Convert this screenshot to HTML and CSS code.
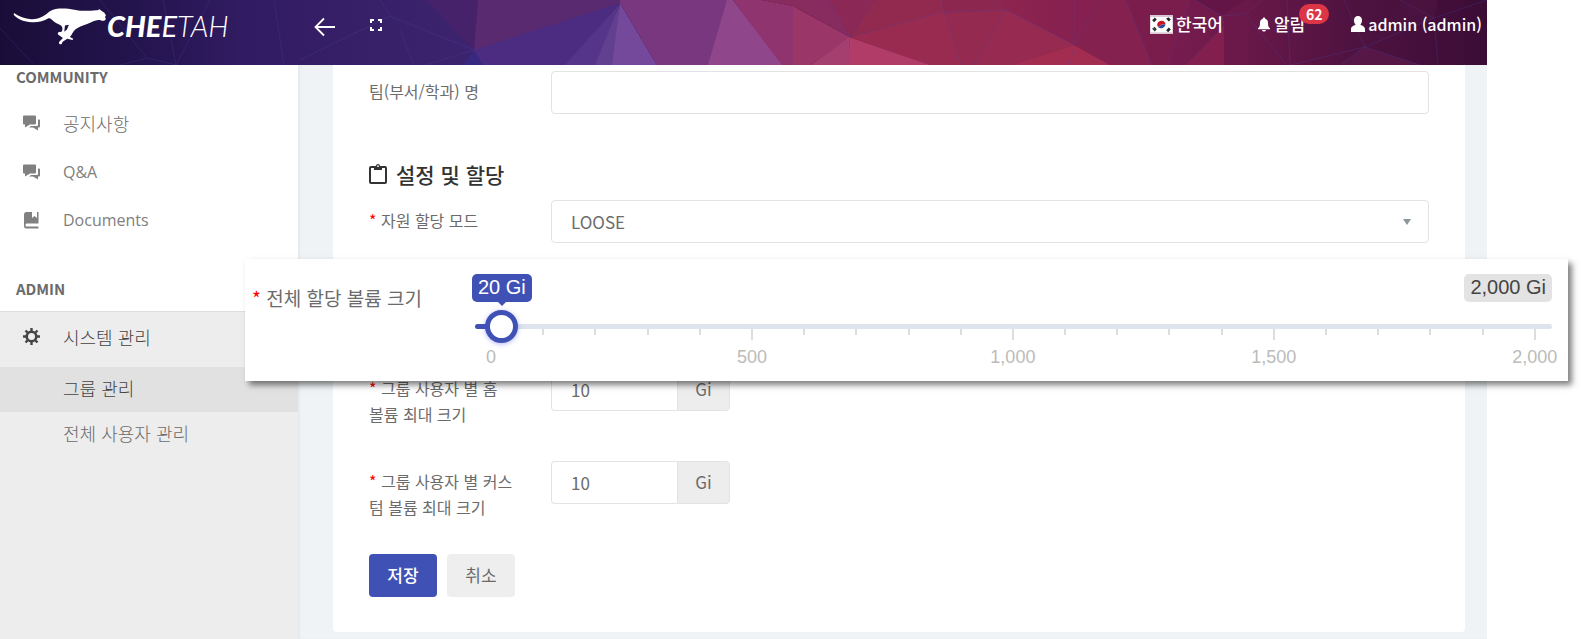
FILE: index.html
```html
<!DOCTYPE html>
<html lang="ko">
<head>
  <meta charset="UTF-8">
  <meta name="viewport" content="width=device-width, initial-scale=1.0">
  <title>CHEETAH - 그룹 관리</title>
  <link rel="stylesheet" href="styles.css">
</head>
<body>
  <div class="page">
    <header class="topbar">
      <!-- Polygon background -->
      <svg class="topbar-bg" viewBox="0 0 1487 65" preserveAspectRatio="none" aria-hidden="true">
        <defs>
          <linearGradient id="night" x1="0" x2="1" y1="0" y2="0">
            <stop offset="0" stop-color="#190d38"/>
            <stop offset="0.36" stop-color="#271654"/>
            <stop offset="0.5" stop-color="#311b61"/>
            <stop offset="1" stop-color="#3e2470"/>
          </linearGradient>
          <linearGradient id="wine" x1="0" x2="1" y1="0" y2="0">
            <stop offset="0" stop-color="#95284f"/>
            <stop offset="0.3" stop-color="#841f50"/>
            <stop offset="0.5" stop-color="#711a4c"/>
            <stop offset="0.75" stop-color="#501341"/>
            <stop offset="1" stop-color="#3a0c36"/>
          </linearGradient>
        </defs>
        <rect width="480" height="65" fill="url(#night)"/>
        <rect x="930" width="557" height="65" fill="url(#wine)"/>
        <path d="M426 0H479L474 50Z" fill="#46226b"/>
        <path d="M478 0H622V3L474 51Z" fill="#592a70"/>
        <path d="M474 50L620 3L566 65H482Z" fill="#4b2c80"/>
        <path d="M474 50L483 65H463Z" fill="#36297f"/>
        <path d="M620 3L596 65H565Z" fill="#55358a"/>
        <path d="M620 3L613 65H595Z" fill="#61408f"/>
        <path d="M620 3L657 65H612Z" fill="#74499b"/>
        <path d="M620 0H728L709 65H657L620 3Z" fill="#78377f"/>
        <path d="M727 0H733L783 65H708Z" fill="#8f468a"/>
        <path d="M733 0H762L794 6V65H782Z" fill="#8f346e"/>
        <path d="M793 6L850 37L811 65H793Z" fill="#9b3668"/>
        <path d="M760 0H830L850 37L793 6Z" fill="#882b5f"/>
        <path d="M829 0H876L849 37Z" fill="#8c2855"/>
        <path d="M875 0H942L944 13L849 37Z" fill="#92294f"/>
        <path d="M849 37L944 12L962 65H929Z" fill="#9a2b50"/>
        <path d="M849 37L811 65H851Z" fill="#a43f70"/>
        <path d="M849 37L850 65H930Z" fill="#b03c67"/>
        <path d="M944 12L1007 10L974 65H961Z" fill="#942a50"/>
        <path d="M1007 10L1074 45L1012 65H973Z" fill="#972a50"/>
        <path d="M1074 45L1012 65H1110Z" fill="#a32c51"/>
        <path d="M942 0H1003L1007 10L944 13Z" fill="#8c2750"/>
        <path d="M1126 0L1152 65H1110L1074 45L1100 0Z" fill="#84214f"/>
        <path d="M1126 0H1190L1168 65H1152Z" fill="#7a1c4c"/>
        <path d="M1224 26L1186 65H1224Z" fill="#821f4f"/>
        <path d="M1195 0H1245L1222 16Z" fill="#641548"/>
        <path d="M1365 47L1340 65H1420Z" fill="#561747"/>
        <path d="M1365 47L1402 0H1438L1434 18Z" fill="#49123f"/>
        <g class="topbar-lines">
          <path d="M0 28L34 65M120 65L147 58L100 0M147 58L177 65M176 65L163 0M176 65L210 0M274 0L284 65M380 0L390 16L300 60M390 16L474 50M400 30L414 65M425 65L474 50"/>
          <path d="M849 37L829 0M849 37L877 0M849 37L944 12L1007 10L974 65M940 0L944 12L961 65M1007 10L1074 45L1100 0M1074 0V45L1070 65M1126 0L1152 65M1168 65L1190 0M1186 65L1224 26L1222 16L1195 0M1222 16L1245 14L1287 65M1245 14L1262 0M1340 65L1365 47L1344 0M1287 0L1290 65L1365 47L1434 18L1487 0M1365 47L1420 65M1434 18L1438 65M1434 18L1400 0"/>
        </g>
      </svg>

      <a class="brand" href="#">
        <svg class="brand-cat" viewBox="38 22 282 112" aria-hidden="true">
          <path d="M41 38C55 48 72 55 92 56C112 57 126 49 140 39C147 32 154 27 166 25C185 22 205 24 222 27C240 31 256 31 272 30C280 30 286 28 292 29L299 26L304 30C311 33 317 39 318 45L315 49L318 55C315 61 308 62 302 59C291 57 282 62 272 66C257 72 244 76 231 83C222 88 219 94 214 103L209 110L219 115L217 119L201 115L187 124L184 131C179 134 175 130 176 125L188 113L174 103C171 101 172 97 176 95L184 94C188 86 187 80 182 75C173 70 163 67 157 60C153 55 150 52 144 53C130 61 113 66 94 65C70 64 52 55 42 46C38 43 38 38 41 38ZM194 75L192 94L200 87L206 73Z"/>
        </svg>
        <span class="brand-name"><span class="brand-heavy">CHE</span><span class="brand-regular">E</span><span class="brand-light">TAH</span></span>
      </a>

      <button class="bar-btn" type="button" aria-label="뒤로">
        <svg width="22" height="20" viewBox="0 0 22 20"><path d="M21 10H2M10 1.500L1.500 10L10 18.500" fill="none" stroke="#fff" stroke-width="1.800"/></svg>
      </button>
      <button class="bar-btn full-btn" type="button" aria-label="전체 화면">
        <svg width="12" height="12" viewBox="0 0 12 12"><path d="M1 4V1H4M8 1H11V4M11 8V11H8M4 11H1V8" fill="none" stroke="#fff" stroke-width="2"/></svg>
      </button>

      <nav class="user-nav">
        <a class="nav-lang" href="#">
          <svg width="23" height="19" viewBox="0 0 69 57" aria-hidden="true">
            <rect width="69" height="57" fill="#d9c5d3"/>
            <rect x="2" y="6" width="65" height="46" fill="#fff"/>
            <path d="M22 33A13 13 0 0 1 46 24C43 35 36 24 32 31C29 36 25 36 22 33Z" fill="#cc1522"/>
            <path d="M22 33C25 36 29 36 32 31C36 24 43 35 46 24A13 13 0 0 1 22 33Z" fill="#2b4a9b"/>
            <path d="M8 17L16 9M11 20L19 12M50 10L58 18M54 8L61 15M8 40L16 48M12 37L19 44M50 47L58 39M53 50L61 42" stroke="#222" stroke-width="4"/>
          </svg>
          한국어
        </a>
        <a class="nav-alarm" href="#">
          <svg width="14" height="15" viewBox="0 0 14 15" aria-hidden="true"><path d="M7 0.500C7.800 0.500 8.200 1 8.200 1.700C10.300 2.300 11 4 11 6C11 9 11.600 10.300 13 11.300V12.200H1V11.300C2.400 10.300 3 9 3 6C3 4 3.700 2.300 5.800 1.700C5.800 1 6.200 0.500 7 0.500ZM5 13H9C8.700 14.200 8 14.600 7 14.600S5.300 14.200 5 13Z" fill="#fff"/></svg>
          알림
          <span class="badge">62</span>
        </a>
        <a class="nav-user" href="#">
          <svg width="14" height="16" viewBox="0 0 14 16" aria-hidden="true"><path d="M7 0C9.500 0 11 1.800 11 4.200C11 6.200 10.300 7.600 9.400 8.600C10.500 9.800 13.500 9.800 14 13V16H0V13C0.500 9.800 3.500 9.800 4.600 8.600C3.700 7.600 3 6.200 3 4.200C3 1.800 4.500 0 7 0Z" fill="#fff"/></svg>
          admin (admin)
        </a>
      </nav>
    </header>

    <div class="layout">
      <!-- Side menu -->
      <nav class="sidebar">
        <h2 class="menu-title">COMMUNITY</h2>
        <ul class="menu">
          <li><a href="#">
            <svg class="menu-icon" viewBox="0 0 17 16"><path d="M1 0H12Q13 0 13 1V8Q13 9 12 9H7L2 12V9H1Q0 9 0 8V1Q0 0 1 0Z"/><path d="M15 4H16Q17 4 17 5V11Q17 12 16 12H15V15L10 12H6L8 10.500H14Q15 10.500 15 9.500Z"/></svg>
            공지사항</a></li>
          <li><a class="latin" href="#">
            <svg class="menu-icon" viewBox="0 0 17 16"><path d="M1 0H12Q13 0 13 1V8Q13 9 12 9H7L2 12V9H1Q0 9 0 8V1Q0 0 1 0Z"/><path d="M15 4H16Q17 4 17 5V11Q17 12 16 12H15V15L10 12H6L8 10.500H14Q15 10.500 15 9.500Z"/></svg>
            Q&amp;A</a></li>
          <li><a class="latin" href="#">
            <svg class="menu-icon" viewBox="0 0 17 17"><path d="M3 0H9V6L11.500 4L14 6V0H15.500V11.500H3.500Q2.500 11.500 2.500 13T3.500 14.500H15.500V16.500H3Q1 16.500 1 14V2.500Q1 0 3 0Z"/></svg>
            Documents</a></li>
        </ul>
        <h2 class="menu-title">ADMIN</h2>
        <ul class="menu menu-open">
          <li><a class="menu-parent" href="#">
            <svg class="menu-icon" viewBox="0 0 17 17"><circle cx="8.500" cy="8.500" r="4.800" fill="none" stroke="#444" stroke-width="2.600"/><path d="M8.500 0V3M8.500 14V17M0 8.500H3M14 8.500H17M2.500 2.500L4.500 4.500M12.500 12.500L14.500 14.500M2.500 14.500L4.500 12.500M12.500 4.500L14.500 2.500" fill="none" stroke="#444" stroke-width="2.400"/></svg>
            시스템 관리</a>
            <ul class="submenu">
              <li><a class="active" href="#">그룹 관리</a></li>
              <li><a href="#">전체 사용자 관리</a></li>
            </ul>
          </li>
        </ul>
      </nav>

      <main class="content">
        <form class="card">
          <div class="form-row">
            <label for="team">팀(부서/학과) 명</label>
            <input class="field" type="text" id="team">
          </div>

          <h3 class="section-title">
            <svg width="18" height="20" viewBox="0 0 18 20" aria-hidden="true"><path d="M5 3H2Q1 3 1 4V18Q1 19 2 19H16Q17 19 17 18V4Q17 3 16 3H13" fill="none" stroke="#333" stroke-width="2"/><path d="M5 2H7Q7 0 9 0T11 2H13V6H5Z" fill="#333"/><circle cx="9" cy="2.200" r="0.900" fill="#fff"/></svg>
            설정 및 할당
          </h3>

          <div class="form-row">
            <label for="mode"><span class="required">*</span> 자원 할당 모드</label>
            <div class="select-box">
              <select class="field" id="mode">
                <option>LOOSE</option>
              </select>
            </div>
          </div>

          <!-- Volume size, shown as a raised panel over the page -->
          <div class="volume-slot">
            <div class="volume-panel">
              <label for="volume"><span class="required">*</span> 전체 할당 볼륨 크기</label>
              <div class="slider">
                <div class="slider-tags">
                  <output class="tag tag-value" for="volume">20 Gi</output>
                  <span class="tag">2,000 Gi</span>
                </div>
                <input class="range" type="range" id="volume" min="0" max="2000" value="20">
                <div class="ticks">
                  <span class="tick major"><b>0</b></span><span class="tick"></span><span class="tick"></span><span class="tick"></span><span class="tick"></span>
                  <span class="tick major"><b>500</b></span><span class="tick"></span><span class="tick"></span><span class="tick"></span><span class="tick"></span>
                  <span class="tick major"><b>1,000</b></span><span class="tick"></span><span class="tick"></span><span class="tick"></span><span class="tick"></span>
                  <span class="tick major"><b>1,500</b></span><span class="tick"></span><span class="tick"></span><span class="tick"></span><span class="tick"></span>
                  <span class="tick major"><b>2,000</b></span>
                </div>
              </div>
            </div>
          </div>

          <div class="form-row">
            <label for="home"><span class="required">*</span> 그룹 사용자 별 홈<br>볼륨 최대 크기</label>
            <div class="input-group">
              <input class="field" type="text" id="home" value="10">
              <span class="addon">Gi</span>
            </div>
          </div>
          <div class="form-row">
            <label for="custom"><span class="required">*</span> 그룹 사용자 별 커스<br>텀 볼륨 최대 크기</label>
            <div class="input-group">
              <input class="field" type="text" id="custom" value="10">
              <span class="addon">Gi</span>
            </div>
          </div>

          <div class="buttons">
            <button class="btn btn-save" type="submit">저장</button>
            <button class="btn" type="button">취소</button>
          </div>
        </form>
      </main>
    </div>
  </div>
</body>
</html>
```

FILE: styles.css
```css
* {
  box-sizing: border-box;
}

body {
  margin: 0;
  background: #fff;
  color: #6b6b6b;
  font-family: "Noto Sans CJK KR", sans-serif;
  font-size: 17px;
}

a {
  color: inherit;
  text-decoration: none;
}

ul {
  list-style: none;
  margin: 0;
  padding: 0;
}

input, select, button {
  font: inherit;
  color: inherit;
}

.page {
  position: relative;
  min-height: 100vh;
  padding-right: 94px;
  display: flex;
  flex-direction: column;
}

/* top bar */
.topbar {
  position: relative;
  z-index: 1;
  height: 65px;
  padding: 0 5px 0 13px;
  display: flex;
  align-items: flex-start;
  background: #3a0c36;
  color: #fff;
}

.topbar-bg {
  position: absolute;
  top: 0;
  left: 0;
  width: 100%;
  height: 100%;
  z-index: -1;
}

.topbar-lines {
  fill: none;
  stroke: #4a4aa8;
  stroke-width: 1;
  opacity: 0.25;
}

.brand {
  display: flex;
  width: 292px;
  padding-top: 8px;
}

.brand-cat {
  width: 94px;
  height: 37px;
  fill: #fff;
}

.brand-name {
  font-family: Lato, sans-serif;
  font-style: italic;
  font-size: 29px;
  line-height: 36px;
}

.brand-heavy {
  font-weight: 900;
}

.brand-regular {
  font-weight: 400;
}

.brand-light {
  font-weight: 300;
}

.bar-btn {
  display: flex;
  align-items: center;
  justify-content: center;
  width: 40px;
  height: 54px;
  padding: 0;
  border: 0;
  background: none;
}

.full-btn {
  height: 50px;
  margin-left: 11px;
}

.user-nav {
  display: flex;
  margin-left: auto;
  gap: 34px;
  font-weight: 500;
  line-height: 48px;
}

.user-nav a {
  display: flex;
  align-items: center;
  gap: 3px;
}

.nav-alarm {
  position: relative;
  margin-right: 12px;
}

.nav-user {
  font-size: 16px;
}

.badge {
  position: absolute;
  top: 4px;
  right: -24px;
  width: 30px;
  height: 20px;
  border-radius: 10px;
  background: #dc3545;
  font-size: 14px;
  font-weight: 700;
  line-height: 20px;
  text-align: center;
}

/* layout */
.layout {
  display: flex;
  flex: 1;
}

.sidebar {
  display: flex;
  flex-direction: column;
  width: 298px;
  flex: none;
  background: #fff;
}

.menu-title {
  margin: 0 0 10px;
  padding-left: 16px;
  font-size: 15px;
  font-weight: 700;
  line-height: 24px;
}

.menu {
  margin-bottom: 34px;
  font-size: 18px;
  font-weight: 300;
}

.menu a {
  display: flex;
  align-items: center;
  height: 48px;
  padding-left: 23px;
}

.menu .latin {
  padding-top: 2px;
  font-family: "Open Sans", sans-serif;
  font-size: 16px;
  font-weight: 400;
  color: #808080;
}

.menu-icon {
  width: 17px;
  height: 17px;
  margin-right: 23px;
  fill: #808080;
}

.menu-open {
  flex: 1;
  margin: 0;
  background: #ededed;
  border-top: 1px solid #ddd;
}

.menu .menu-parent {
  height: 55px;
  padding-bottom: 6px;
  color: #444;
}

.menu .submenu a {
  height: 45px;
  padding: 0 0 3px 63px;
}

.menu .submenu .active {
  background: #e1e1e1;
  color: #444;
}

.content {
  flex: 1;
  min-width: 0;
  padding: 0 22px 7px 35px;
  background: #eff3f5;
  box-shadow: inset 2px 0 2px rgba(0, 0, 0, 0.04);
}

/* form */
.card {
  padding: 6px 36px 35px;
  background: #fff;
  border-radius: 0 0 4px 4px;
}

.form-row {
  display: flex;
  align-items: flex-start;
  min-height: 60px;
  margin-bottom: 33px;
}

.form-row label {
  width: 182px;
  flex: none;
  padding-top: 7px;
  font-size: 16px;
  line-height: 26px;
}

.required {
  color: #f00;
}

.field {
  flex: 1;
  width: 100%;
  min-width: 0;
  height: 43px;
  padding: 0 19px 1px;
  border: 1px solid #e3e3e3;
  border-radius: 4px;
  background: #fff;
}

.section-title {
  display: flex;
  align-items: center;
  gap: 9px;
  margin: 0 0 16px;
  color: #333;
  font-size: 21px;
  font-weight: 500;
  line-height: 20px;
}

.select-box {
  position: relative;
  flex: 1;
}

.select-box select {
  display: block;
  appearance: none;
}

.select-box::after {
  content: "";
  position: absolute;
  top: 19px;
  right: 18px;
  border: 4px solid transparent;
  border-top: 6px solid #8a979c;
  border-bottom: 0;
}

.input-group {
  display: flex;
  width: 179px;
}

.input-group .field {
  border-right: 0;
  border-radius: 4px 0 0 4px;
}

.addon {
  width: 53px;
  border: 1px solid #e3e3e3;
  border-radius: 0 4px 4px 0;
  background: #ededed;
  line-height: 40px;
  text-align: center;
}

.buttons {
  display: flex;
  gap: 10px;
}

.btn {
  width: 68px;
  height: 43px;
  padding: 0 0 3px;
  border: 0;
  border-radius: 4px;
  background: #eee;
  cursor: pointer;
}

.btn-save {
  background: #3f51b5;
  color: #fff;
  font-weight: 500;
}

/* raised volume panel */
.volume-slot {
  height: 42px;
  margin-bottom: 33px;
}

.volume-panel {
  position: absolute;
  z-index: 2;
  top: 259px;
  left: 245px;
  right: 13px;
  height: 122px;
  padding: 15px 16px 0 7px;
  display: flex;
  background: #fff;
  box-shadow: 4px 4px 6px rgba(0, 0, 0, 0.5);
}

.volume-panel label {
  width: 220px;
  flex: none;
  padding-top: 11px;
  font-size: 19px;
  line-height: 26px;
}

.slider {
  flex: 1;
  font-family: "Liberation Sans", Arial, sans-serif;
}

.slider-tags {
  display: flex;
  justify-content: space-between;
}

.tag {
  height: 28px;
  padding: 0 6px;
  border-radius: 5px;
  background: #e3e3e3;
  color: #444;
  font-size: 20px;
  line-height: 27px;
}

.tag-value {
  position: relative;
  background: #3f51b5;
  color: #fff;
}

.tag-value::after {
  content: "";
  position: absolute;
  top: 100%;
  left: 50%;
  margin-left: -4px;
  border: 4px solid transparent;
  border-top-color: #3f51b5;
  border-bottom: 0;
}

.range {
  position: relative;
  z-index: 1;
  display: block;
  width: calc(100% - 3px);
  height: 33px;
  margin: 8px 0 0 3px;
  appearance: none;
  background: none;
}

.range::-webkit-slider-runnable-track {
  height: 5px;
  border-radius: 3px;
  background: linear-gradient(to right, #3f51b5 26px, #dde4ee 26px);
}

.range::-webkit-slider-thumb {
  appearance: none;
  width: 33px;
  height: 33px;
  margin-top: -14px;
  border: 5px solid #3f51b5;
  border-radius: 50%;
  background: #fff;
  box-shadow: 0 1px 5px rgba(70, 70, 255, 0.4);
}

.ticks {
  display: flex;
  justify-content: space-between;
  margin: -14px 16px 0 18px;
}

.tick {
  width: 2px;
  height: 6px;
  background: #ddd;
}

.tick.major {
  display: flex;
  justify-content: center;
  height: 11px;
}

.tick b {
  padding-top: 18px;
  color: #bbb;
  font-size: 18px;
  font-weight: 400;
  line-height: 20px;
}
```
